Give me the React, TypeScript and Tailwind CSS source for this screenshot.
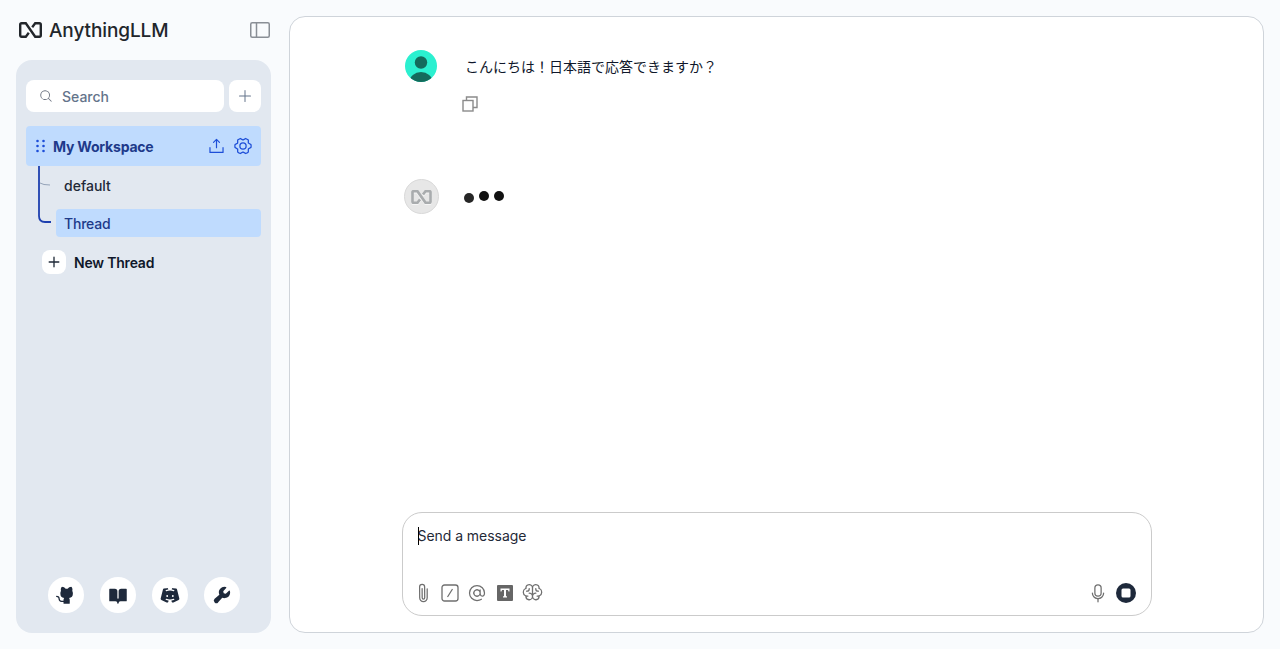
import React from 'react';
import {
  PiMagnifyingGlass, PiPlus, PiPlusBold, PiUploadSimple, PiGearSix,
  PiGithubLogoFill, PiBookOpenFill, PiDiscordLogoFill, PiWrenchFill,
  PiPaperclip, PiAt, PiBrain, PiMicrophone,
} from 'react-icons/pi';

const Logo = ({ className, strokeWidth = 2.4 }: { className: string; strokeWidth?: number }) => (
  <svg viewBox="0 0 23 16" fill="none" stroke="currentColor" strokeWidth={strokeWidth} className={className}>
    <path d="M9.800 10.800 6.800 14.700H2.600Q1.200 14.700 1.200 13.300V2.700Q1.200 1.300 2.600 1.300H6.800L16.200 14.700H20.400Q21.800 14.700 21.800 13.300V2.700Q21.800 1.300 20.400 1.300H16.200L13.200 5.200" />
  </svg>
);

const FooterButton = ({ children }: { children: React.ReactNode }) => (
  <div className="flex h-9 w-9 items-center justify-center rounded-full bg-white text-[20px] text-[#1e293b]">
    {children}
  </div>
);

const Sidebar = () => (
  <aside className="flex w-[255px] shrink-0 flex-col">
    <div className="flex h-[52px] shrink-0 items-center justify-between pb-[8px] pl-[3px]">
      <div className="flex items-center gap-[7px] text-[#22262b]">
        <Logo className="h-[16px] w-[23px]" />
        <span className="pt-[2px] text-[19px] font-medium tracking-[-0.1px]">AnythingLLM</span>
      </div>
      <svg viewBox="0 0 20 16" fill="none" stroke="#8a8f96" strokeWidth="1.5" className="mr-[1px] h-4 w-5">
        <rect x="0.75" y="0.75" width="18.5" height="14.5" rx="1.5" />
        <path d="M6.5 1v14" />
      </svg>
    </div>
    <div className="flex min-h-0 flex-1 flex-col justify-between rounded-[16px] bg-[#e2e8f0] px-[10px] pt-[20px] pb-[20px]">
      <div>
        <div className="flex gap-[5px]">
          <div className="flex h-8 w-[198px] items-center gap-[9px] rounded-lg bg-white pl-[13px] text-sm font-medium text-[#64748b]">
            <PiMagnifyingGlass className="text-[14px] text-[#6b7280]" />
            <span className="pt-[2px]">Search</span>
          </div>
          <div className="flex h-8 w-8 items-center justify-center rounded-lg bg-white text-[#64748b]">
            <PiPlus className="text-[16px]" />
          </div>
        </div>
        <div className="mt-[14px] flex h-10 items-center justify-between rounded-[4px] bg-[#bfdbfe] pl-[9px] pr-[8px] text-[#1e3a8a]">
          <div className="flex items-center gap-[6px]">
            <svg viewBox="0 0 12 14" fill="#1d4ed8" className="h-[14px] w-[12px]">
              <circle cx="2.500" cy="2" r="1.300" />
              <circle cx="8.500" cy="2" r="1.300" />
              <circle cx="2.500" cy="7" r="1.300" />
              <circle cx="8.500" cy="7" r="1.300" />
              <circle cx="2.500" cy="12" r="1.300" />
              <circle cx="8.500" cy="12" r="1.300" />
            </svg>
            <span className="pt-[2px] text-sm font-bold tracking-[-0.2px]">My Workspace</span>
          </div>
          <div className="flex items-center gap-[7px] text-[#1d4ed8]">
            <PiUploadSimple className="text-[19px]" />
            <PiGearSix className="text-[20px]" />
          </div>
        </div>
        <div className="relative h-[71px]">
          <svg viewBox="0 0 20 60" fill="none" className="absolute left-[12px] top-0 h-[60px] w-[20px]">
            <path d="M1 0V50Q1 56 7 56H13" stroke="#1e40af" strokeWidth="1.8" />
            <path d="M2 17Q5 19 12 19" stroke="#94a3b8" strokeWidth="1" />
          </svg>
          <div className="flex h-[39px] items-center pt-px pl-[38px] text-sm font-medium text-[#1f2937]">default</div>
          <div className="ml-[30px] mt-[4px] flex h-[28px] items-center rounded-[4px] bg-[#bfdbfe] pl-[8px] pt-[2px] text-sm font-medium tracking-[-0.2px] text-[#1e3a8a]">Thread</div>
        </div>
        <div className="mt-[13px] flex items-center gap-2 pl-[16px]">
          <div className="flex h-6 w-6 items-center justify-center rounded-lg bg-white text-[#1f2937]">
            <PiPlusBold className="text-[14px]" />
          </div>
          <span className="pt-[2px] text-sm font-semibold tracking-[-0.2px] text-[#0f172a]">New Thread</span>
        </div>
      </div>
      <div className="flex justify-center gap-4">
        <FooterButton><PiGithubLogoFill /></FooterButton>
        <FooterButton><PiBookOpenFill /></FooterButton>
        <FooterButton><PiDiscordLogoFill /></FooterButton>
        <FooterButton><PiWrenchFill /></FooterButton>
      </div>
    </div>
  </aside>
);

const Messages = () => (
  <div className="ml-[115px] flex-1 pt-[33px]">
    <div className="flex items-start">
      <svg viewBox="0 0 32 32" className="h-8 w-8 shrink-0">
        <defs><clipPath id="avatarClip"><circle cx="16" cy="16" r="16" /></clipPath></defs>
        <g clipPath="url(#avatarClip)">
          <rect width="32" height="32" fill="#2bf0d0" />
          <circle cx="16" cy="12.5" r="6.2" fill="#146b5c" />
          <ellipse cx="16" cy="32" rx="11.5" ry="10" fill="#146b5c" />
        </g>
      </svg>
      <div className="ml-[28px] pt-[5px]">
        <p className="text-sm leading-[24px] text-[#0f172a]">こんにちは！日本語で応答できますか？</p>
      </div>
    </div>
    <svg viewBox="0 0 16 16" fill="none" stroke="#8b8b8b" strokeWidth="1.4" className="ml-[57px] mt-[14px] h-4 w-4">
      <rect x="1" y="4.5" width="10" height="10.5" />
      <path d="M4.5 4.5V1H15V11.5H11" />
    </svg>
    <div className="mt-[67px] flex items-center">
      <div className="ml-[-1px] flex h-[35px] w-[35px] items-center justify-center rounded-full border border-[#d9d9d9] bg-[#e7e7e7] text-[#a9acae]">
        <Logo className="h-[14px] w-[21px] drop-shadow-[0_1px_0_#f5f5f5]" strokeWidth={3} />
      </div>
      <div className="ml-[25px] flex items-center gap-[5px]">
        <div className="mt-[2px] h-[10px] w-[10px] rounded-full bg-[#262626]" />
        <div className="mt-[-1px] h-[10px] w-[10px] rounded-full bg-[#111111]" />
        <div className="mt-[-1px] h-[10px] w-[10px] rounded-full bg-[#111111]" />
      </div>
    </div>
  </div>
);

const Composer = () => (
  <div className="mx-auto mb-4 flex h-[104px] w-[750px] shrink-0 flex-col justify-between rounded-[20px] border border-[#cbcbcb] bg-white pt-[11px] pr-[15px] pb-[12px] pl-[14px]">
    <div className="relative text-sm leading-[24px] tracking-[-0.05px] text-[#1f2937]">
      <span className="absolute left-px top-[3px] h-[18px] w-px bg-black" />
      <span className="ml-px">Send a message</span>
    </div>
    <div className="flex items-center justify-between">
      <div className="flex items-center gap-[8px] text-[#6f6f6f]">
        <PiPaperclip className="ml-[-4px] text-[20px] -rotate-45" />
        <svg viewBox="0 0 18 18" fill="none" stroke="currentColor" className="h-[18px] w-[18px]">
          <rect x="1" y="1" width="16" height="16" rx="2.5" strokeWidth="1.3" />
          <path d="M6.500 13 11.500 5" strokeWidth="1.2" />
        </svg>
        <PiAt className="text-[20px]" />
        <svg viewBox="0 0 16 16" className="ml-[2px] h-4 w-4">
          <rect width="16" height="16" rx="1" fill="#666666" />
          <path d="M3.5 3.5h9v3h-1l-.5-1.5H9v6l1 .5v1H6v-1l1-.5V5H5L4.5 6.500h-1z" fill="#ffffff" />
        </svg>
        <PiBrain className="ml-px text-[21px]" />
      </div>
      <div className="flex items-center gap-[8px]">
        <PiMicrophone className="text-[20px] text-[#6f6f6f]" />
        <svg viewBox="0 0 20 20" className="h-5 w-5">
          <circle cx="10" cy="10" r="10" fill="#1e293b" />
          <rect x="5.500" y="5.500" width="9" height="9" rx="1.500" fill="#ffffff" />
        </svg>
      </div>
    </div>
  </div>
);

export default function App() {
  return (
    <div
      className="flex h-[649px] w-[1280px] gap-[18px] overflow-hidden bg-[#f9fbfd] pl-[16px] pr-[16px] pb-[16px] pt-[8px]"
      style={{ fontFamily: 'Inter, "Noto Sans CJK JP", sans-serif' }}
    >
      <Sidebar />
      <main className="mt-[8px] flex min-w-0 flex-1 flex-col rounded-[16px] border border-[#cfd4da] bg-white">
        <Messages />
        <Composer />
      </main>
    </div>
  );
}
